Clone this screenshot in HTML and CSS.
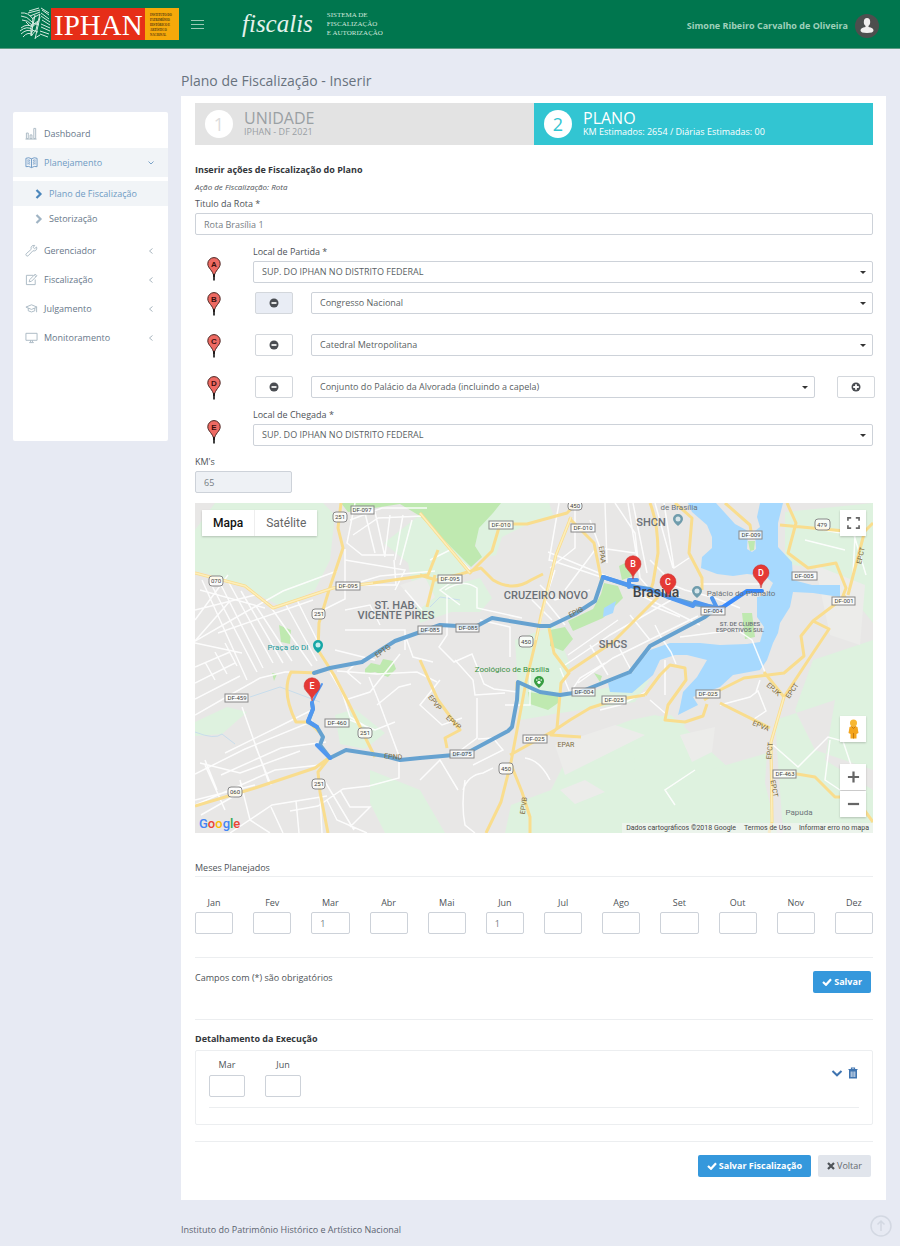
FILE: index.html
```html
<!DOCTYPE html>
<html lang="pt-BR">
<head>
<meta charset="utf-8">
<meta name="viewport" content="width=device-width, initial-scale=1">
<title>Fiscalis - Plano de Fiscalização</title>
<link rel="stylesheet" href="styles.css">
</head>
<body>
<svg class="defs" aria-hidden="true">
  <symbol id="pin" viewBox="0 0 14 24"><path d="M7 20C6 13 .8 11.500 .8 6.800A6.200 6.200 0 0 1 13.200 6.800C13.200 11.500 8 13 7 20z" fill="#ee6a63" stroke="#4a2522" stroke-width="1"/><path d="M7 17v6.500" stroke="#111" stroke-width="1.600"/></symbol>
  <symbol id="minus" viewBox="0 0 10 10"><circle cx="5" cy="5" r="4.500" fill="#4a4d52"/><path d="M2.500 5h5" stroke="#fff" stroke-width="1.700"/></symbol>
  <symbol id="plus" viewBox="0 0 10 10"><circle cx="5" cy="5" r="4.500" fill="#4a4d52"/><path d="M2.200 5h5.600M5 2.200v5.600" stroke="#fff" stroke-width="1.800"/></symbol>
  <symbol id="check" viewBox="0 0 10 8"><path d="M1 4l3 2.800L9 1.200" fill="none" stroke="#fff" stroke-width="2.200"/></symbol>
  <symbol id="left" viewBox="0 0 6 8"><path d="M4.500 1.500L1.500 4l3 2.500" fill="none" stroke="#aab7c0" stroke-width="1"/></symbol>
  <symbol id="right" viewBox="0 0 8 10"><path d="M1.500 1L5.500 5l-4 4" fill="none" stroke="currentColor" stroke-width="2.200"/></symbol>
</svg>

<header class="topbar">
  <svg class="logo" viewBox="0 0 159 34" role="img" aria-label="IPHAN">
    <g fill="none" stroke="#d5eadf" stroke-width="1">
      <path d="M1 6q7-1 12 6M1 9q6 0 11 6M2 13q6 0 10 5M1 21q6-5 12-1M0 24q7-6 13-1M1 27q6-6 12-2M3 30q5-6 10-2"/>
      <path d="M9 4l10-3M8 6l12-3M10 9l10-4M21 1l8 5M22 3l7 5M21 6l8 6M21 9l9 6M22 13l8 5M21 17l9 4M21 20l9 4M20 24l9 3M20 27l8 3"/>
      <path d="M13 11l7-4-2 8-6 5zM11 19l7-5-2 9-5 6zM15 8l-4 20M20 10l-5 22M13 16l6 2M12 23l6 2M15 31l5-3M6 15l4 4"/>
    </g>
    <rect x="31" y="1" width="94" height="32" fill="#e62e18"/>
    <rect x="125" y="1" width="34" height="32" fill="#f6a90a"/>
    <text x="34" y="28" class="logo-name">IPHAN</text>
    <g class="logo-sub">
      <text x="130" y="9">INSTITUTO DO</text><text x="130" y="14">PATRIMÔNIO</text><text x="130" y="19">HISTÓRICO E</text><text x="130" y="24">ARTÍSTICO</text><text x="130" y="29">NACIONAL</text>
    </g>
  </svg>
  <button class="menu-toggle" type="button" aria-label="Alternar menu"><svg viewBox="0 0 13 9"><path d="M0 .5h13M0 4.500h13M0 8.500h13" stroke="#9cc9b5" stroke-width="1"/></svg></button>
  <span class="brand">fiscalis</span>
  <span class="system">SISTEMA DE<br>FISCALIZAÇÃO<br>E AUTORIZAÇÃO</span>
  <a class="user" href="#perfil">Simone Ribeiro Carvalho de Oliveira
    <svg viewBox="0 0 24 24"><circle cx="12" cy="12" r="12" fill="#4d4f4e"/><ellipse cx="12" cy="8" rx="3.200" ry="4" fill="#f1efee"/><path d="M10.500 10h3v3q5 .5 5 3.500 0 2.500-6.500 2.500t-6.500-2.500q0-3 5-3.500z" fill="#f1efee"/></svg>
  </a>
</header>

<div class="layout">
  <nav class="sidebar">
    <a class="item" href="#dashboard"><svg class="ico" viewBox="0 0 14 14"><path d="M1.500 12.500v-6h2v6zM5.500 12.500V8.500h2v4zM9.500 12.500V1.500h2v11zM.5 13h12"/></svg><span>Dashboard</span></a>
    <a class="item open" href="#planejamento"><svg class="ico" viewBox="0 0 14 14"><path d="M7 3Q4 1 1 2.500v9Q4 10.500 7 12.500 10 10.500 13 11.500v-9Q10 1 7 3zM7 3v9.500M2.500 4.500q1.500-.5 3 .3M2.500 6.500q1.500-.5 3 .3M2.500 8.500q1.500-.5 3 .3M8.500 4.800q1.500-.8 3-.3M8.500 6.800q1.500-.8 3-.3M8.500 8.800q1.500-.8 3-.3"/></svg><span>Planejamento</span><svg class="chev" viewBox="0 0 8 6"><path d="M1.500 1.500L4 4l2.500-2.500" fill="none" stroke="#7ba3c8"/></svg></a>
    <div class="sub">
      <a class="subitem current" href="#plano"><svg viewBox="0 0 8 10"><use href="#right"/></svg>Plano de Fiscalização</a>
      <a class="subitem" href="#setorizacao"><svg viewBox="0 0 8 10"><use href="#right"/></svg>Setorização</a>
    </div>
    <a class="item" href="#gerenciador"><svg class="ico" viewBox="0 0 14 14"><path d="M12.500 3.200L10.300 5 8.800 3.700 10.500 1.500Q7.500.8 6.600 3.500 6.500 5 6.800 5.600L1.300 10.500q-.8 1 .1 2t2 .2L8.500 7.300Q10 7.800 11.500 7 13.300 5.500 12.500 3.200z"/></svg><span>Gerenciador</span><svg class="chev" viewBox="0 0 6 8"><use href="#left"/></svg></a>
    <a class="item" href="#fiscalizacao"><svg class="ico" viewBox="0 0 14 14"><path d="M9 2.500H1.500v10h9.500V7M4.500 9.500l.7-2.500L11 1.200 12.800 3 7 8.900zM10 2.300l1.800 1.700"/></svg><span>Fiscalização</span><svg class="chev" viewBox="0 0 6 8"><use href="#left"/></svg></a>
    <a class="item" href="#julgamento"><svg class="ico" viewBox="0 0 14 14"><path d="M1 5.500L7 3l6 2.500L7 8zM3.500 6.500v3q3.500 2.500 7 0v-3M12.500 6v5"/></svg><span>Julgamento</span><svg class="chev" viewBox="0 0 6 8"><use href="#left"/></svg></a>
    <a class="item" href="#monitoramento"><svg class="ico" viewBox="0 0 14 14"><path d="M1 2.500h12v7.500H1zM4.500 12.500h5M6 10v2M8 10v2"/></svg><span>Monitoramento</span><svg class="chev" viewBox="0 0 6 8"><use href="#left"/></svg></a>
  </nav>

  <main class="content">
    <h1 class="page-title">Plano de Fiscalização - Inserir</h1>
    <form class="panel">
      <div class="steps">
        <div class="step"><span class="num">1</span><div><div class="step-name">UNIDADE</div><div class="step-desc">IPHAN - DF 2021</div></div></div>
        <div class="step active"><span class="num">2</span><div><div class="step-name">PLANO</div><div class="step-desc">KM Estimados: 2654 / Diárias Estimadas: 00</div></div></div>
      </div>

      <h2 class="section-title first">Inserir ações de Fiscalização do Plano</h2>
      <p class="hint">Ação de Fiscalização: Rota</p>
      <div class="field title-field"><label for="titulo">Titulo da Rota *</label><input id="titulo" type="text" value="Rota Brasília 1"></div>

      <div class="stop end">
        <span class="mark"><svg viewBox="0 0 14 24"><use href="#pin"/><text x="7" y="10">A</text></svg></span>
        <div class="field"><label for="partida">Local de Partida *</label><span class="pick"><select id="partida"><option>SUP. DO IPHAN NO DISTRITO FEDERAL</option></select></span></div>
      </div>
      <div class="vias">
        <div class="stop via">
          <span class="mark"><svg viewBox="0 0 14 24"><use href="#pin"/><text x="7" y="10">B</text></svg></span>
          <button class="mini pressed" type="button" aria-label="Remover ponto B"><svg viewBox="0 0 10 10"><use href="#minus"/></svg></button>
          <span class="pick"><select aria-label="Ponto B"><option>Congresso Nacional</option></select></span>
        </div>
        <div class="stop via">
          <span class="mark"><svg viewBox="0 0 14 24"><use href="#pin"/><text x="7" y="10">C</text></svg></span>
          <button class="mini" type="button" aria-label="Remover ponto C"><svg viewBox="0 0 10 10"><use href="#minus"/></svg></button>
          <span class="pick"><select aria-label="Ponto C"><option>Catedral Metropolitana</option></select></span>
        </div>
        <div class="stop via last">
          <span class="mark"><svg viewBox="0 0 14 24"><use href="#pin"/><text x="7" y="10">D</text></svg></span>
          <button class="mini" type="button" aria-label="Remover ponto D"><svg viewBox="0 0 10 10"><use href="#minus"/></svg></button>
          <span class="pick"><select aria-label="Ponto D"><option>Conjunto do Palácio da Alvorada (incluindo a capela)</option></select></span>
          <button class="mini" type="button" aria-label="Adicionar ponto"><svg viewBox="0 0 10 10"><use href="#plus"/></svg></button>
        </div>
      </div>
      <div class="stop end">
        <span class="mark"><svg viewBox="0 0 14 24"><use href="#pin"/><text x="7" y="10">E</text></svg></span>
        <div class="field"><label for="chegada">Local de Chegada *</label><span class="pick"><select id="chegada"><option>SUP. DO IPHAN NO DISTRITO FEDERAL</option></select></span></div>
      </div>
      <div class="field km"><label for="km">KM's</label><input id="km" type="text" value="65" readonly></div>

      <div class="map">
        <svg class="map-canvas" viewBox="195 503 678 330" role="img" aria-label="Mapa da rota em Brasília">
          <rect x="195" y="503" width="678" height="330" fill="#e8e7e6"/>
          <!-- light vegetation -->
          <g fill="#def2df">
            <path d="M195 530l20-27h108l12 12-5 45-15 30-33 17-48-25-26-8-13-3z"/>
            <path d="M476 530q5-20 18-27h55l5 14-28 8-24 12-6 18-20 5z"/>
            <path d="M420 515l50 48-20 30 10 16-40 14-12-60-24-20z"/>
            <path d="M335 715l20-6 30 24-20 16-25-5zM370 770l50 20 25 43h-60l-15-30zM195 722l32-15 20 5-25 22-27 2zM505 833l6-28 40-15 25-50 55-20 40-5 60 55 30 63z"/>
            <path d="M631 720l24-5 30 8-8 38 22 12 68-20-2 30 12 50H640z"/>
            <path d="M785 512l88-9v120l-40-50-48-10zM873 640l-60 20-18 50 20 40 58 20zM775 720l60-20-10 60 48 30v43h-90z"/>
            <path d="M515 640l40-15 15 40-20 50-30 5zM440 588l40-10 12 20-12 14h-35zM540 700l110-20-15 22-95 14z"/>
          </g>
          <g fill="#ececea"><path d="M555 745l60-20 30 10-80 40zM680 735l35-8-3 25-20 10zM815 565l50 20-5 60-30-10zM560 790l25-10 20 12-30 12zM400 585l25-8 10 20-15 12z"/></g>
          <!-- parks -->
          <g fill="#bfe9b0">
            <path d="M341 503h160l-8 10-14 15-4 18 7 11-11 10-51-51-20-12-52 8z"/>
            <path d="M604 583l14 3 5 12-20 20-30 13-5-10 25-12 8-15zM550 630l15-3 8 12-10 12-13-5zM528 692l30 4v7l-10 7-18-6zM365 669l6-6 9 2 3-6 10 2 3 8-8 8-13-5-10 2zM279 625l12 5-1 14-9-2zM619 566l8-4 6 14-11 4zM742 613l10 0 3 24-10 2zM594 673l8 3-2 6zM272 673l5 1-3 7z"/>
          </g>
          <!-- lake -->
          <g fill="#a7d9fe">
            <path d="M688 503l4 9 15 13 5 12v11l-10 9-1 11 16 6 16 2 14-2 18 2 8 7-6 12-10 2v20l7 10-4 15-13 2-27 1-20-2h-30l-20 7-10 12-8 11-24 10 2 9 22 1 21-18 7-15 15-5h12l20 5-10 17-14 15-3 15-2 8 20-10-5-8 27-10 13-12 27-5 7-10 6-17 5-10 2-10 10-16 3-15 20 1 27 4v-12h-28l-19-5-1-18-14-15v-24l5-20h-23l-3 14 3 10-5 4 1 18-4 3-5-3 1-18-13-7-19-21z"/>
            <path d="M604 608l12-7-3 12-10 4z"/>
          </g>
          <path d="M748 541l7 0-1 9-4 1z" fill="#bfe9b0"/>
          <path d="M195 732q20 8 27 2l13 10M250 697l30-10 40 15M430 607l10-10 20 3" fill="none" stroke="#c8ddec"/>
          <!-- local streets -->
          <g fill="none" stroke="#fff" stroke-width="1.500" opacity=".9">
            <path d="M202 580l45 100M209 580l48 92M218 579l45 89M228 581l45 82M241 591l42 72M256 606l36 55M270 606l42 60M285 603l32 58M297 600l25 50M195 641l35-40M195 667l35-15M195 699l45-23M195 620l33-45M195 683l40-20M205 662l10 18M215 652l12 22M225 643l12 23M195 643l47 10M195 610l60-15M200 590l65 18M218 633l95-33"/>
            <path d="M195 641l40-23 48-27 54-20M195 715l35-20 30-17 25-6h20M225 753l55-27 30-15M195 774l50-25 68-28M205 765l20 45M200 763l40 10 60-22M255 745l16 40M221 775l60-27 45-6M195 805l80-35 45-5M195 800l60-15M240 780l10 40 20 13M230 833l42-28 55-9M271 807l12 26M296 801l3 32M320 797l2 36M201 815l35-20M205 760l12 30M242 707l27 76"/>
            <path d="M340 588l40-12 55-5M345 549v50l-20 10M346 585h50l-2-25M345 630h60v20M335 650l40 10M337 671l40 3 40-2 20 10M361 684l-14-12 10-10M369 677l10 25 20 54v22l-30 8-26 3-25 17-28 5M330 672l12 20 8 25 20 12M345 700l25-8 30-38M377 705l22-18 12-3M350 720l25 10 20-8M327 800l10 20 30 13M340 790l10 17h20l-20 20M324 780l30 50M440 680l-20 25 22 20 20-7"/>
            <path d="M355 503l-8 40 15 12h32M350 520l32-12h45M353 535l25-17 45-2M365 513l10 40M375 512l10 45M390 515l-5 40M403 515l-8 45M412 520l-12 45M345 560l60 10-10 20M405 590l17 20M345 610l25-5 10 20M405 635l8 22 20 5"/>
            <path d="M430 560l20-10 20 20-30 20 20 15M447 595v40l-8 12 15 15 18-8 12 30 10 5 23 3M445 590q18-12 32-2v20l45 10M480 620l30 7v30M455 660l18 20 2 15 30-2M477 698v40l-20 15M473 765l30-15-10-12-15 1M463 790q5-15 20-17l10-5M465 780q-4 25 0 45l10 8M420 780l20-20 18 30M548 552l73 30M550 560l78 26M559 503l-10 58M575 503v45l-25 20M590 520l10 28 35 5M605 503l2 60M565 590l30-40M555 570l-10 30 20 25M540 585l15 15 35-10M532 600l20 20"/>
            <path d="M615 503l20 30 5 45 13 15M628 503l12 75M633 503l14 70M655 503l18 65M664 503l10 65 15-10M660 580l25 10 30 8 25 10M565 665l45-30 70-40M578 683l35-25 85-42M560 668l10 25 10-15 25-15M568 655l50-35M590 645l18 30M615 640l16 30M630 615l20 25M680 637l32-4 25-3 15 10 13 32M650 605l30 12M640 595l60 30M700 584h60M650 560l20 20M655 625l6 12 10 15 5 12"/>
            <path d="M650 700l15 13M665 660v35M720 705l30-8 8-6 8 20-12 8M760 680l-4 12M773 745l25 22 30-30 15 4 10 30M855 535l-2 40M851 525l15 50M695 770l-30 20 10 15M830 740l-5 40 30 20M823 530l30 5M805 540l40 10M550 780q-10-20-25-22M505 705h25v-40M600 710l20-5 30-15"/>
          </g>
          <!-- highways -->
          <g fill="none" stroke="#f9dd8e" stroke-width="3" stroke-linejoin="round">
            <path d="M195 573l50 13 28 22 60-20 40-5 55-8 10-25M341 503l-3 25 5 20-14 42-10 33-1 27 16 25 14 27 17 35 10 20M318 673l-27-1q-10 20 5 50h13l10 10M195 806l60-18 60-20 15-11-12 15 2 20 8 41M420 575l16 5 25-6 20-6 12 12q20 12 38 0l12-6M420 513l50 60 22-22 8-27M497 524h30l40-11 10-10M571 517l-15 38-15 60-5 25-10 42-15 80-10 40-15 31M517 682v8M569 518l25 25 8 40M420 660l18 40 22 30-15 8 2 10M510 755l45-25 15-10 20-12 25-8 30-5M549 628l5 25 15 20-8 10-4 45-6 7 30 2M568 672l45-30 45-45M510 762l12 30 8 25v16M435 575l-8 32"/>
            <path d="M650 503q8 20 8 50l-5 30-5 15M675 503l17 15-3 35 13 25v12M725 503l25 22 2 12M787 503l9 20-8 30 20 15 28-5 10 25-5 13M780 525l65 6h20l8-8M865 530l-17 65M846 596l-33 25-12 15 3 20-20 17-40 5-30 15-10 7M645 695l15-20 10-10 15 3 1 12-18 25-3 15 20 2 18-6 4-12M720 703l50 25M784 697l25-38 20-30-16-8M784 697l-20-25M784 697l-13 45 1 80-3 11M785 772l30 5 20 20h20l18 25"/>
          </g>
          <g fill="none" stroke="#fdeebb" stroke-width="1.500"><path d="M195 573l50 13 28 22 60-20 40-5M571 517l-15 38-20 85M784 697l-13 45 1 80M420 513l50 60"/></g>
          <!-- route -->
          <g fill="none" stroke-linejoin="round" stroke-linecap="round">
            <path d="M314 673l16-5 32-6 33-21 45-16 35 2 17-9 48 8h10l25-12 20-13 8-24 27 9 20 3 18 8 25 7 22 3M717 608l-12 9-55 29-20 26-50 20-20 3-20-3-22-10-1 18-5 27-4 4-43 23-45 4-20 2-15-4-39-6-16 8-10-13 3-8-6-10-9-5 5-13-1-6" stroke="#66a2d0" stroke-width="4"/>
            <path d="M317 727l-9-6 5-12-1-6M317 745l13 13M603 577l32 10 18 4 15 6 25 9 2-4 20 6M629 587v-7h8M712 598l5 10" stroke="#5198ef" stroke-width="4"/>
            <path d="M312 703l5-10 5-9" stroke="#5198ef" stroke-width="2"/>
            <path d="M713 609l10-2 24-16h15" stroke="#3889fb" stroke-width="4"/>
          </g>
          <!-- road numbers -->
          <g class="shield">
            <rect x="351" y="506" width="23" height="8"/><rect x="336" y="582" width="24" height="8"/><rect x="225" y="694" width="23" height="8"/><rect x="325" y="719" width="24" height="8"/><rect x="489" y="521" width="24" height="8"/><rect x="571" y="524" width="24" height="8"/><rect x="438" y="575" width="24" height="8"/><rect x="418" y="626" width="24" height="8"/><rect x="456" y="624" width="23" height="8"/><rect x="572" y="688" width="23" height="8"/><rect x="602" y="696" width="24" height="8"/><rect x="523" y="735" width="24" height="8"/><rect x="450" y="750" width="24" height="8"/><rect x="739" y="531" width="23" height="8"/><rect x="792" y="572" width="25" height="8"/><rect x="832" y="597" width="23" height="8"/><rect x="701" y="607" width="24" height="8"/><rect x="696" y="690" width="24" height="8"/><rect x="773" y="770" width="23" height="8"/>
            <rect x="333" y="512" width="14" height="10" rx="3"/><rect x="209" y="576" width="14" height="10" rx="3"/><rect x="312" y="609" width="13" height="10" rx="3"/><rect x="358" y="728" width="14" height="10" rx="3"/><rect x="312" y="779" width="13" height="10" rx="3"/><rect x="228" y="787" width="14" height="10" rx="3"/><rect x="568" y="502" width="14" height="8" rx="3"/><rect x="519" y="636" width="14" height="11" rx="3"/><rect x="499" y="763" width="14" height="11" rx="3"/><rect x="815" y="519" width="15" height="11" rx="3"/>
          </g>
          <g class="num-label">
            <text x="362" y="512">DF-097</text><text x="348" y="588">DF-095</text><text x="237" y="700">DF-459</text><text x="337" y="725">DF-460</text><text x="501" y="527">DF-010</text><text x="583" y="530">DF-010</text><text x="450" y="581">DF-095</text><text x="430" y="632">DF-085</text><text x="468" y="630">DF-085</text><text x="584" y="694">DF-004</text><text x="614" y="702">DF-025</text><text x="535" y="741">DF-025</text><text x="462" y="756">DF-075</text><text x="751" y="537">DF-009</text><text x="804" y="578">DF-005</text><text x="844" y="603">DF-001</text><text x="713" y="613">DF-004</text><text x="708" y="696">DF-025</text><text x="785" y="776">DF-463</text>
            <text x="340" y="519">251</text><text x="216" y="583">070</text><text x="319" y="616">251</text><text x="365" y="735">251</text><text x="319" y="786">251</text><text x="235" y="794">060</text><text x="575" y="508">450</text><text x="526" y="644">450</text><text x="506" y="771">450</text><text x="822" y="527">479</text>
          </g>
          <g class="road-label">
            <text transform="translate(384 653) rotate(-35)">EPTG</text><text transform="translate(393 759) rotate(4)">EPND</text><text transform="translate(577 614) rotate(-28)">EPIG</text><text transform="translate(600 555) rotate(83)">EPAA</text><text transform="translate(433 704) rotate(52)">EPVP</text><text transform="translate(452 724) rotate(42)">EPVP</text><text transform="translate(526 806) rotate(-82)">EPVB</text><text x="566" y="747">EPAR</text><text transform="translate(863 556) rotate(-78)">EPCT</text><text transform="translate(772 691) rotate(42)">EPJK</text><text transform="translate(794 692) rotate(-56)">EPCT</text><text transform="translate(760 728) rotate(22)">EPVA</text><text transform="translate(772 751) rotate(-84)">EPCT</text><text transform="translate(772 789) rotate(80)">EPCT</text>
          </g>
          <!-- places -->
          <g class="place">
            <text x="396" y="609">ST. HAB.</text><text x="396" y="619">VICENTE PIRES</text><text x="546" y="599">CRUZEIRO NOVO</text><text x="613" y="648">SHCS</text><text x="651" y="526">SHCN</text>
          </g>
          <g class="place tiny"><text x="740" y="626">ST. DE CLUBES</text><text x="740" y="632">ESPORTIVOS SUL</text></g>
          <text class="city" x="656" y="597">Brasília</text>
          <g class="poi"><text x="679" y="510">de Brasília</text><text x="741" y="596">Palácio do Planalto</text><text x="799" y="815">Papuda</text><text x="512" y="672" fill="#38903f">Zoológico de Brasília</text><text x="288" y="650" fill="#249b9b">Praça do DI</text></g>
          <g>
            <path d="M318 653q-5-4-5-8a5 5 0 0 1 10 0q0 4-5 8z" fill="#16a6a6"/><circle cx="318" cy="645" r="2.500" fill="#c6eeee"/>
            <path d="M678 526q-5-4-5-7a5 5 0 0 1 10 0q0 3-5 7zM697 598q-5-4-5-7a5 5 0 0 1 10 0q0 3-5 7z" fill="#6f9cac"/><circle cx="678" cy="519" r="2.500" fill="#d8e6ea"/><circle cx="697" cy="591" r="2.500" fill="#d8e6ea"/>
            <path d="M539 688q-5-4-5-7a5 5 0 0 1 10 0q0 3-5 7z" fill="#389d42"/><g fill="#fff"><circle cx="539" cy="682.300" r="1.600"/><circle cx="536.800" cy="680" r=".8"/><circle cx="539" cy="679" r=".8"/><circle cx="541.200" cy="680" r=".8"/></g>
          </g>
          <!-- route stops -->
          <g fill="#e53935" stroke="#c62828" stroke-width=".5">
            <path d="M633 579q0-4-5-9a8 8 0 1 1 10 0q-5 5-5 9z"/><path d="M668 597q0-4-5-9a8 8 0 1 1 10 0q-5 5-5 9z"/><path d="M761 588q0-4-5-9a8 8 0 1 1 10 0q-5 5-5 9z"/><path d="M312 701q0-4-5-9a8 8 0 1 1 10 0q-5 5-5 9z"/>
          </g>
          <g class="stop-label"><text x="633" y="567">B</text><text x="668" y="585">C</text><text x="761" y="576">D</text><text x="312" y="689">E</text></g>
        </svg>
        <div class="map-type"><button type="button" class="on">Mapa</button><button type="button">Satélite</button></div>
        <button class="map-btn full" type="button" aria-label="Tela cheia"><svg viewBox="0 0 14 14"><path d="M1 4.500V1.500h3.500M9.500 1.500H13V4.500M13 9.500v3H9.500M4.500 12.500H1V9.500" fill="none" stroke="#666" stroke-width="1.800"/></svg></button>
        <div class="map-tools">
          <button class="map-btn" type="button" aria-label="Street View"><svg viewBox="0 0 12 20"><path d="M2 8q4-2 8 0l1 6-2 1v4.500H3V15l-2-1z" fill="#f4a51d"/><circle cx="6" cy="4" r="3.500" fill="#f7b733"/><path d="M4 7.500l2 2 2-2M6 14v5.500" stroke="#c47a10" fill="none"/></svg></button>
          <div class="zoom"><button class="map-btn" type="button" aria-label="Ampliar"><svg viewBox="0 0 14 14"><path d="M1 7h12M7 1v12" stroke="#666" stroke-width="2.400"/></svg></button><button class="map-btn" type="button" aria-label="Reduzir"><svg viewBox="0 0 14 14"><path d="M1 7h12" stroke="#666" stroke-width="2.400"/></svg></button></div>
        </div>
        <span class="google"><b class="gb">G</b><b class="gr">o</b><b class="gy">o</b><b class="gb">g</b><b class="gg">l</b><b class="gr">e</b></span>
        <div class="map-credits"><span>Dados cartográficos ©2018 Google</span><a href="#termos">Termos de Uso</a><a href="#erro">Informar erro no mapa</a></div>
      </div>

      <h3 class="months-title">Meses Planejados</h3>
      <div class="months">
        <label>Jan<input type="text"></label><label>Fev<input type="text"></label><label>Mar<input type="text" value="1"></label><label>Abr<input type="text"></label><label>Mai<input type="text"></label><label>Jun<input type="text" value="1"></label><label>Jul<input type="text"></label><label>Ago<input type="text"></label><label>Set<input type="text"></label><label>Out<input type="text"></label><label>Nov<input type="text"></label><label>Dez<input type="text"></label>
      </div>
      <div class="save-row"><p>Campos com (*) são obrigatórios</p><button class="btn primary" type="button"><svg viewBox="0 0 10 8"><use href="#check"/></svg>Salvar</button></div>

      <section class="details">
        <h2 class="section-title">Detalhamento da Execução</h2>
        <div class="detail-box">
          <div class="detail-row">
            <label>Mar<input type="text"></label><label>Jun<input type="text"></label>
            <div class="detail-actions">
              <button type="button" aria-label="Expandir"><svg viewBox="0 0 12 12"><path d="M1.500 4L6 8.300 10.500 4" fill="none" stroke="#3f74b0" stroke-width="2"/></svg></button>
              <button type="button" aria-label="Excluir"><svg viewBox="0 0 12 12"><path d="M1.500 2.500h9M4.500 2V1h3v1" fill="none" stroke="#3f74b0" stroke-width="1.200"/><path d="M2 3h8v8.500H2z" fill="#3f74b0"/><path d="M4.200 4.500v5.500M6 4.500v5.500M7.800 4.500v5.500" stroke="#fff" stroke-width=".8"/></svg></button>
            </div>
          </div>
        </div>
      </section>
      <div class="final-row"><button class="btn primary" type="button"><svg viewBox="0 0 10 8"><use href="#check"/></svg>Salvar Fiscalização</button><button class="btn" type="button"><svg class="x" viewBox="0 0 8 8"><path d="M1 1l6 6M7 1L1 7" stroke="#4e5358" stroke-width="2.200"/></svg>Voltar</button></div>
    </form>
  </main>
</div>
<footer class="footer"><span>Instituto do Patrimônio Histórico e Artístico Nacional</span><a href="#topo" aria-label="Voltar ao topo"><svg viewBox="0 0 22 22"><circle cx="11" cy="11" r="10" fill="none" stroke="#d3d8e2" stroke-width="1.500"/><path d="M11 16V6M7.500 9.500L11 6l3.500 3.500" fill="none" stroke="#d3d8e2" stroke-width="1.500"/></svg></a></footer>
</body>
</html>
```
FILE: styles.css
```css
* { box-sizing: border-box; }
body { margin: 0; background: #e7eaf3; color: #4e5358; font: 9px/14px "Open Sans", sans-serif; }
h1, h2, h3, p { margin: 0; font-weight: 400; }
a { color: inherit; text-decoration: none; }
button, input, select { font: inherit; color: inherit; margin: 0; }
button { padding: 0; border: 0; background: none; cursor: pointer; }
svg { display: block; }
.defs { position: absolute; width: 0; height: 0; }

.topbar { display: flex; align-items: center; height: 49px; padding: 0 21px 0 20px; background: #00764e; border-bottom: 1px solid #5d9c84; color: #b4d9c9; }
.logo { width: 159px; height: 34px; }
.logo-name { font: 29px "Liberation Serif", serif; fill: #fff; }
.logo-sub { font: bold 3px "Liberation Serif", serif; fill: #4d3410; }
.menu-toggle { margin-left: 12px; }
.menu-toggle svg { width: 13px; height: 9px; }
.brand { margin-left: 38px; font: italic 25px/32px "Liberation Serif", serif; color: #e4f2ec; }
.system { margin-left: 14px; font: 7px/9px "Liberation Serif", serif; color: #cfe6dc; }
.user { display: flex; align-items: center; gap: 7px; margin: 4px 0 0 auto; font-weight: 700; color: #9fd0bb; }
.user svg { width: 24px; height: 24px; }

.layout { display: grid; grid-template-columns: 155px minmax(0, 1fr); gap: 13px; padding: 22px 14px 0 13px; }
.sidebar { align-self: start; min-height: 329px; margin-top: 41px; padding-top: 7px; background: #fff; border-radius: 2px; color: #68788a; }
.item { display: flex; align-items: center; gap: 6px; height: 29px; padding: 0 13px 0 12px; }
.item span { flex: 1; }
.ico { width: 13px; height: 13px; fill: none; stroke: #a9b8c2; stroke-width: 1; }
.chev { width: 8px; height: 8px; }
.open { background: #f1f4f7; color: #6f9bc3; }
.open .ico { stroke: #6c97c4; }
.sub { padding: 4px 0 5px; }
.subitem { display: flex; align-items: center; gap: 6px; height: 25px; padding-left: 22px; }
.subitem svg { width: 8px; height: 10px; color: #a0b4c4; }
.current { background: #f1f4f7; color: #6f9bc3; }
.current svg { color: #4b86bb; }

.page-title { font-size: 14px; line-height: 20px; color: #68727e; }
.panel { margin-top: 5px; padding: 7px 13px 23px 14px; background: #fff; }
.steps { display: grid; grid-template-columns: 1fr 1fr; }
.step { display: flex; align-items: center; gap: 11px; height: 42px; padding-left: 10px; background: #e3e3e3; color: #9aa0a3; }
.num { width: 28px; height: 28px; border-radius: 50%; background: #fff; color: #dcdcdc; font-size: 18px; line-height: 28px; text-align: center; }
.step-name { font-size: 16px; line-height: 16px; }
.step-desc { font-size: 9px; line-height: 12px; }
.active { background: #32c5d2; color: #fff; }
.active .num { color: #32c5d2; }

.section-title { font-size: 9px; font-weight: 700; color: #33373b; }
.first { margin-top: 18px; }
.hint { margin-top: 5px; font-size: 8px; line-height: 10px; font-style: italic; }
.field { display: flex; flex-direction: column; gap: 2px; min-width: 0; }
input, select { width: 100%; height: 22px; padding: 0 8px; border: 1px solid #cdd2d9; border-radius: 2px; background: #fff; color: #5a5f64; }
input { color: #777d83; }
.title-field { margin-top: 5px; }
.stop { display: grid; grid-template-columns: 14px minmax(0, 1fr); column-gap: 32px; padding-left: 12px; }
.end { align-items: end; margin-top: 10px; }
.end .mark { padding-bottom: 2px; }
.mark svg { width: 14px; height: 24px; }
.mark text { font: bold 8px "Liberation Sans", sans-serif; text-anchor: middle; fill: #3c100d; }
.pick { position: relative; display: block; min-width: 0; }
.pick::after { content: ""; position: absolute; right: 7px; top: 10px; border: 3px solid transparent; border-top-color: #333; border-bottom: 0; pointer-events: none; }
select { appearance: none; }
.vias { display: grid; gap: 20px; margin-top: 9px; }
.via { grid-template-columns: 14px 54px minmax(0, 1fr); column-gap: 18px; height: 22px; }
.via .mini:nth-child(2) { justify-self: end; }
.last { grid-template-columns: 14px 54px minmax(0, 1fr) 38px; margin-right: -2px; }
.last .pick { margin-right: 4px; }
.mini { display: grid; place-items: center; width: 38px; height: 22px; border: 1px solid #d3d7dc; border-radius: 2px; background: #fff; }
.mini svg { width: 10px; height: 10px; }
.pressed { background: #e9edf5; }
.km { width: 97px; margin-top: 9px; }
.km input { background: #eef1f5; }

.map { position: relative; margin-top: 10px; font-family: Roboto, sans-serif; }
.map-canvas { width: 100%; height: auto; }
.shield rect { fill: #fff; stroke: #888; stroke-width: 1; fill-opacity: .75; }
.map-canvas text { text-anchor: middle; }
.num-label { font: 6px Roboto, sans-serif; fill: #444; }
.road-label { font: 7px Roboto, sans-serif; fill: #7d6b3e; }
.place { font: 500 11px Roboto, sans-serif; fill: #6b7076; }
.tiny { font-size: 6px; }
.city { font: 500 14px Roboto, sans-serif; fill: #3f4347; }
.poi { font: 8px Roboto, sans-serif; fill: #6d7479; }
.stop-label { font: 500 9px Roboto, sans-serif; fill: #fff; }
.map-type { position: absolute; left: 7px; top: 7px; display: flex; background: #fff; box-shadow: 0 1px 2px #0003; font-size: 12px; line-height: 26px; color: #666; }
.map-type button { padding: 0 11px; }
.map-type .on { font-weight: 500; color: #111; border-right: 1px solid #eee; }
.map-btn { display: grid; place-items: center; width: 26px; height: 26px; background: #fff; box-shadow: 0 1px 2px #0003; }
.map-btn svg { width: 13px; height: 14px; }
.map-tools .map-btn svg { height: 20px; }
.full { position: absolute; right: 7px; top: 7px; }
.map-tools { position: absolute; right: 7px; bottom: 16px; display: grid; gap: 22px; }
.zoom { display: grid; gap: 1px; background: #eee; }
.google { position: absolute; left: 4px; bottom: 2px; font-size: 13px; line-height: 14px; }
.google b { font-weight: 500; }
.gb { color: #4285f4; }
.gr { color: #ea4335; }
.gy { color: #fbbc05; }
.gg { color: #34a853; }
.map-credits { position: absolute; right: 0; bottom: 0; display: flex; gap: 8px; padding: 0 4px; font-size: 7px; line-height: 10px; color: #444; background: #f5f5f599; }

.months-title { margin-top: 28px; padding-bottom: 1px; border-bottom: 1px solid #eceef0; font-size: 9px; }
.months { display: grid; grid-template-columns: repeat(12, minmax(0, 1fr)); column-gap: 20px; padding: 19px 0 23px; text-align: center; border-bottom: 1px solid #eceef0; }
.months input { display: block; margin-top: 2px; }
.save-row { display: flex; justify-content: space-between; padding: 13px 2px 26px 0; border-bottom: 1px solid #eceef0; }
.btn { display: flex; align-items: center; gap: 2px; height: 22px; padding: 0 9px; border-radius: 2px; background: #e1e5ec; color: #666b70; }
.btn svg { width: 10px; height: 8px; }
.btn .x { width: 8px; }
.primary { background: #3598dc; color: #fff; font-weight: 700; }
.details { padding: 12px 0 16px; border-bottom: 1px solid #eceef0; }
.detail-box { margin-top: 4px; padding: 7px 13px 16px; border: 1px solid #eceef0; border-radius: 2px; }
.detail-row { display: flex; gap: 20px; padding-bottom: 10px; border-bottom: 1px solid #eceef0; }
.detail-row label { width: 36px; text-align: center; }
.detail-row input { display: block; margin-top: 3px; }
.detail-actions { display: flex; gap: 4px; align-items: center; margin-left: auto; height: 30px; }
.detail-actions svg { width: 12px; height: 12px; }
.final-row { display: flex; justify-content: flex-end; gap: 7px; padding: 13px 2px 0 0; }
.footer { display: flex; align-items: center; justify-content: space-between; padding: 15px 8px 8px 181px; color: #5c6470; }
.footer span { margin-top: 8px; }
.footer svg { width: 22px; height: 22px; }
```
